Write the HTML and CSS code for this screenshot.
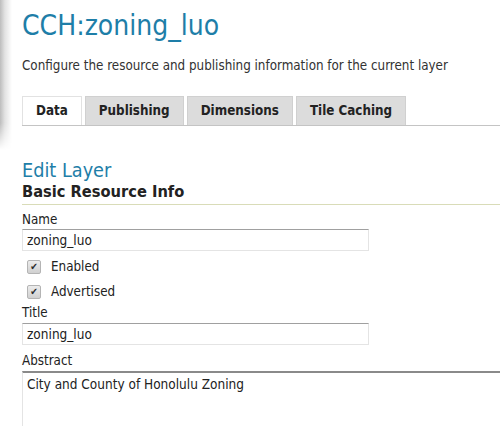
FILE: index.html
```html
<!DOCTYPE html>
<html>
<head>
<meta charset="utf-8">
<link rel="stylesheet" href="styles.css">
</head>
<body>
<div class="page">
  <div class="header">
    <h1 class="title">CCH:zoning_luo</h1>
    <p class="desc">Configure the resource and publishing information for the current layer</p>
    <div class="tabs">
      <div class="tab active">Data</div>
      <div class="tab">Publishing</div>
      <div class="tab">Dimensions</div>
      <div class="tab">Tile Caching</div>
    </div>
  </div>
  <div class="content">
    <h2 class="edit">Edit Layer</h2>
    <h3 class="section">Basic Resource Info</h3>
    <div class="field">
      <label class="label">Name</label>
      <div class="input">zoning_luo</div>
    </div>
    <div class="checks">
      <div class="check"><span class="box">&#10004;</span><span>Enabled</span></div>
      <div class="check"><span class="box">&#10004;</span><span>Advertised</span></div>
    </div>
    <div class="field">
      <label class="label tight">Title</label>
      <div class="input">zoning_luo</div>
    </div>
    <div class="field">
      <label class="label spaced">Abstract</label>
      <div class="textarea">City and County of Honolulu Zoning</div>
    </div>
  </div>
</div>
</body>
</html>
```
FILE: styles.css
```css
html, body {
  margin: 0;
  padding: 0;
  background: #fff;
  overflow: hidden;
}
body {
  font-family: "DejaVu Sans Condensed", "DejaVu Sans", sans-serif;
  color: #333;
  font-size: 13.3px;
}
.page {
  padding-left: 22px;
}
.header {
  position: relative;
}
.header::before {
  content: "";
  position: absolute;
  left: -22px;
  top: 0;
  width: 12px;
  height: 150px;
  background: linear-gradient(to right, #bdbdbd, #e2e2e2 40%, #fff);
  -webkit-mask-image: linear-gradient(to bottom, #000 82%, transparent);
  mask-image: linear-gradient(to bottom, #000 82%, transparent);
}
.title {
  margin: 0;
  padding-top: 10px;
  font-size: 28px;
  font-weight: normal;
  color: #1e7ea8;
  line-height: 32px;
}
.desc {
  margin: 16px 0 0;
  line-height: 16px;
}
.tabs {
  display: flex;
  gap: 3px;
  margin-top: 22px;
  border-bottom: 1px solid #c4c4c4;
}
.tab {
  height: 28px;
  line-height: 28px;
  padding: 0 13px;
  background: #dcdcdc;
  border: 1px solid #d0d0d0;
  border-bottom: none;
  font-weight: bold;
  color: #222;
}
.tab.active {
  background: #fff;
  border-color: #e2e2e2;
}
.content {
  padding-top: 34px;
}
.edit {
  margin: 0;
  font-size: 19.7px;
  font-weight: normal;
  color: #1e7ea8;
  line-height: 22px;
}
.section {
  margin: 0;
  font-size: 16.3px;
  font-weight: bold;
  color: #222;
  line-height: 20px;
  padding-bottom: 2px;
  border-bottom: 1px solid #d9dcb8;
}
.field {
  display: flex;
  flex-direction: column;
}
.label {
  display: block;
  line-height: 16px;
  margin-top: 7px;
  margin-bottom: 1px;
  color: #222;
}
.label.tight {
  margin-top: 1px;
  margin-bottom: 2px;
}
.label.spaced {
  margin-top: 8px;
  margin-bottom: 2px;
}
.input {
  width: 337px;
  height: 20px;
  line-height: 20px;
  padding: 0 4px;
  border: 1px solid #e4e4e4;
  border-top-color: #a0a0a0;
  color: #222;
  font-size: 13.5px;
}
.checks {
  padding-top: 3px;
}
.check {
  display: flex;
  align-items: center;
  gap: 10px;
  height: 25px;
  padding-left: 5px;
  color: #222;
}
.box {
  width: 12px;
  height: 12px;
  border: 1px solid #b4b4b4;
  border-radius: 2px;
  background: linear-gradient(#ececec, #d0d0d0);
  font-size: 10px;
  font-weight: bold;
  line-height: 12px;
  text-align: center;
  color: #2a2a2a;
}
.textarea {
  width: 500px;
  height: 80px;
  padding: 3px 4px;
  border: 1px solid #e4e4e4;
  border-top: 2px solid #8a8a8a;
  color: #222;
  font-size: 13.5px;
  line-height: 16px;
}
```
